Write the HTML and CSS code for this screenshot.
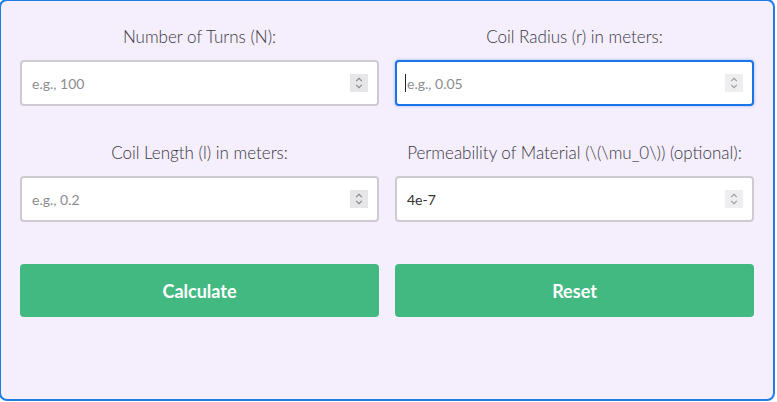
FILE: index.html
```html
<!DOCTYPE html>
<html lang="en">
<head>
<meta charset="utf-8">
<title>Solenoid Inductance Calculator</title>
<link rel="stylesheet" href="styles.css">
</head>
<body>
<div class="card">
  <div class="fields">
    <div class="group">
      <label class="label" for="n">Number of Turns (N):</label>
      <div class="field">
        <input id="n" class="input" type="text" placeholder="e.g., 100">
        <span class="spin"><svg width="18" height="18" viewBox="0 0 18 18"><rect width="18" height="18" fill="#e6e6e9"/><polyline points="6.2,7.2 9,4.4 11.8,7.2" fill="none" stroke="#858585" stroke-width="1.1"/><polyline points="6.2,10.8 9,13.6 11.8,10.8" fill="none" stroke="#858585" stroke-width="1.1"/></svg></span>
      </div>
    </div>
    <div class="group">
      <label class="label" for="r">Coil Radius (r) in meters:</label>
      <div class="field">
        <input id="r" class="input focused" type="text" placeholder="e.g., 0.05">
        <span class="caret"></span>
        <span class="spin"><svg width="18" height="18" viewBox="0 0 18 18"><rect width="18" height="18" fill="#eeeef0"/><polyline points="6.2,7.2 9,4.4 11.8,7.2" fill="none" stroke="#9a9a9a" stroke-width="1.1"/><polyline points="6.2,10.8 9,13.6 11.8,10.8" fill="none" stroke="#9a9a9a" stroke-width="1.1"/></svg></span>
      </div>
    </div>
    <div class="group">
      <label class="label" for="l">Coil Length (l) in meters:</label>
      <div class="field">
        <input id="l" class="input" type="text" placeholder="e.g., 0.2">
        <span class="spin"><svg width="18" height="18" viewBox="0 0 18 18"><rect width="18" height="18" fill="#e6e6e9"/><polyline points="6.2,7.2 9,4.4 11.8,7.2" fill="none" stroke="#858585" stroke-width="1.1"/><polyline points="6.2,10.8 9,13.6 11.8,10.8" fill="none" stroke="#858585" stroke-width="1.1"/></svg></span>
      </div>
    </div>
    <div class="group">
      <label class="label" for="mu">Permeability of Material (\(\mu_0\)) (optional):</label>
      <div class="field">
        <input id="mu" class="input" type="text" value="4e-7">
        <span class="spin"><svg width="18" height="18" viewBox="0 0 18 18"><rect width="18" height="18" fill="#eeeef0"/><polyline points="6.2,7.2 9,4.4 11.8,7.2" fill="none" stroke="#9a9a9a" stroke-width="1.1"/><polyline points="6.2,10.8 9,13.6 11.8,10.8" fill="none" stroke="#9a9a9a" stroke-width="1.1"/></svg></span>
      </div>
    </div>
  </div>
  <div class="actions">
    <button class="btn" type="button">Calculate</button>
    <button class="btn" type="button">Reset</button>
  </div>
</div>
</body>
</html>
```
FILE: styles.css
```css
html, body {
  margin: 0;
  padding: 0;
  background: #ffffff;
}
body {
  font-family: Lato, "Liberation Sans", sans-serif;
  overflow: hidden;
}
.card {
  box-sizing: border-box;
  width: 776px;
  margin: -1px 0 0 -1px;
  height: 402px;
  border: 2px solid #1f7de3;
  border-radius: 8px;
  background: #f4eefd;
  padding: 24px 19px 0 19px;
}
.fields {
  display: grid;
  grid-template-columns: 1fr 1fr;
  column-gap: 16px;
  row-gap: 35px;
}
.group {
  display: flex;
  flex-direction: column;
}
.label {
  display: block;
  text-align: center;
  white-space: nowrap;
  font-size: 17px;
  font-weight: 300;
  line-height: 24px;
  color: #38383d;
  margin-bottom: 11px;
}
.field {
  position: relative;
}
.input {
  box-sizing: border-box;
  width: 100%;
  height: 46px;
  border: 2px solid #cdcbd1;
  border-radius: 4px;
  background: #ffffff;
  padding: 0 40px 0 10px;
  font-family: Lato, "Liberation Sans", sans-serif;
  font-size: 14px;
  color: #333333;
  outline: none;
}
.input::placeholder {
  color: #8c8c8f;
}
.input.focused {
  border-color: #1a74e6;
  box-shadow: 0 0 3px rgba(26, 116, 230, 0.45);
}
.caret {
  position: absolute;
  left: 10px;
  top: 14px;
  width: 1px;
  height: 18px;
  background: #222222;
}
.spin {
  position: absolute;
  right: 11px;
  top: 14px;
  width: 18px;
  height: 18px;
  line-height: 0;
}
.actions {
  display: grid;
  grid-template-columns: 1fr 1fr;
  column-gap: 16px;
  margin-top: 42px;
}
.btn {
  height: 53px;
  border: none;
  border-radius: 4px;
  background: #43b982;
  color: #ffffff;
  font-family: Lato, "Liberation Sans", sans-serif;
  font-weight: 700;
  font-size: 18px;
  cursor: pointer;
}
```
